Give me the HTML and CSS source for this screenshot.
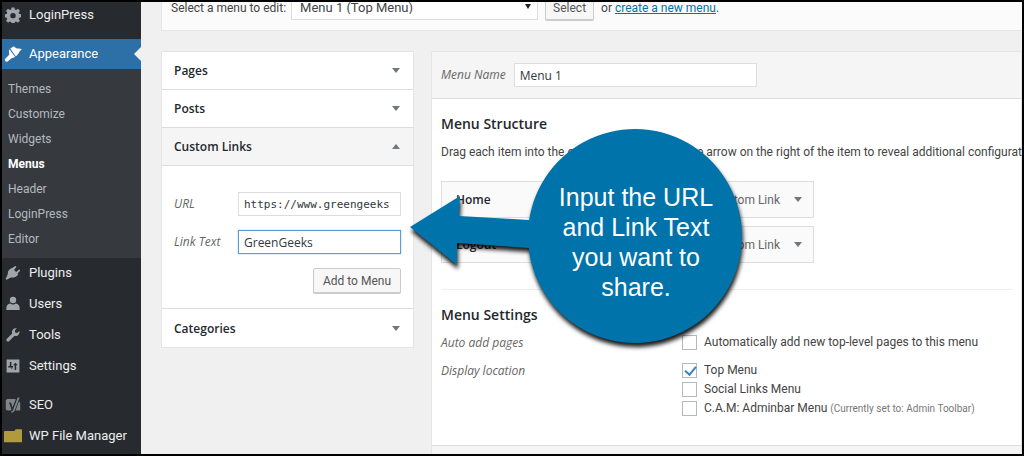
FILE: index.html
```html
<!DOCTYPE html>
<html lang="en">
<head>
<meta charset="utf-8">
<title>Menus</title>
<link rel="stylesheet" href="styles.css">
</head>
<body>
<div class="frame">
  <nav class="sidebar">
    <a class="item first" href="#"><svg class="icon" viewBox="0 0 20 20"><path fill-rule="evenodd" d="M8.200.5h3.600l.5 2.700 1.600.7 2.300-1.600 2.500 2.500-1.600 2.300.7 1.600 2.700.5v3.600l-2.700.5-.7 1.600 1.600 2.300-2.500 2.500-2.300-1.600-1.600.7-.5 2.700H8.200l-.5-2.700-1.600-.7-2.300 1.600-2.500-2.500 1.600-2.300-.7-1.600-2.700-.5V9.200l2.700-.5.7-1.600-1.600-2.300 2.500-2.500 2.300 1.600 1.600-.7zM10 7.400a3.400 3.400 0 1 0 0 6.800 3.400 3.400 0 0 0 0-6.800z"/></svg>LoginPress</a>
    <a class="item current" href="#"><svg class="icon brush" viewBox="0 0 20 20"><path d="M6.900 3.800 11 1.400l2.400 2.300 6.600.8-3.200 3.200-.6 1.800-3 3.300zM5.900 4.800l6.400 8.200c-1.300 1.600-3 .9-4.300 2L4 18.200c-1.900 1-3.900-.9-2.900-2.700L5.500 11c.9-1.800-.9-4.200.4-6.200z"/></svg>Appearance</a>
    <div class="submenu">
      <a href="#">Themes</a>
      <a href="#">Customize</a>
      <a href="#">Widgets</a>
      <a href="#" class="active">Menus</a>
      <a href="#">Header</a>
      <a href="#">LoginPress</a>
      <a href="#">Editor</a>
    </div>
    <a class="item" href="#"><svg class="icon" viewBox="0 0 20 20"><path d="M12.500 1.500c.8-.8 2.300.5 1.500 1.400L11.300 6.200l2.700 2.600 3.200-2.800c1-.8 2.200.6 1.400 1.500l-3 3.200 1 1c-1.500 2.600-4.400 4.600-7.700 3.900-1.800-.4-3.500.7-5 2L1.500 18.500.8 17.500l1.200-2.800c1-1.900 1.700-3.600 1.600-5C3.500 7 6 4.600 8.400 4z"/></svg>Plugins</a>
    <a class="item" href="#"><svg class="icon" viewBox="0 0 20 20"><circle cx="10" cy="5" r="4"/><path d="M6.500 9.500c2 1.700 5 1.700 7 0 3 .5 4.800 2.600 4.800 5.500v2.500H1.700V15c0-2.900 1.800-5 4.800-5.500z"/></svg>Users</a>
    <a class="item" href="#"><svg class="icon" viewBox="0 0 20 20"><path d="M17.900 5.100c.7 2.100-.1 4.400-2 5.500-1.300.8-2.700.8-4 .4L5.300 17.600c-2 2-5-.8-2.900-2.900L9 8.100C8 5.400 9.500 2.300 12.400 1.600c.8-.2 1.600-.1 2.400.1l-2.600 2.700.5 2.400 2.500.7z"/></svg>Tools</a>
    <a class="item" href="#"><svg class="icon" viewBox="0 0 20 20"><path fill-rule="evenodd" d="M2 2h16v16H2zM6 5v5H4v2h2v0h2v2h1v0-2h1v-2H8V5zM13 6l-3 3h2v6h2V9h2z"/></svg>Settings</a>
    <a class="item spaced" href="#"><svg class="icon dim" viewBox="0 0 20 20"><path d="M3.500 2.500h10L12 6.500 9.300 13 7.500 7H5l3 8.200c-.3 1-.9 1.600-2 1.800H3.500C2 17 1 16 1 14.500V5c0-1.500 1-2.500 2.500-2.500z"/><path d="M15.800.5h2.500L12.500 16c-.8 2-2 3.500-4.500 3.700v-1.900c1.300-.3 2-1.100 2.300-2.300z"/><path d="M17.400 5.500c1 .5 1.600 1.500 1.600 2.500v9h-5.900z"/></svg>SEO</a>
    <a class="item" href="#"><svg class="icon folder" viewBox="0 0 20 20"><path d="M0 5.500c0-.6.400-1 1-1h10.500l1.500-2h6c.6 0 1 .4 1 1V17H0z"/></svg>WP File Manager</a>
  </nav>

  <main class="main">
    <form class="chooser">
      <label for="menu">Select a menu to edit:</label>
      <select id="menu" class="menu-select"><option>Menu 1 (Top Menu)</option></select>
      <button type="button" class="button select-button">Select</button>
      <span class="or">or <a href="#">create a new menu</a>.</span>
    </form>

    <div class="columns">
      <section class="accordion">
        <h3 class="acc-head">Pages<span class="caret"></span></h3>
        <h3 class="acc-head">Posts<span class="caret"></span></h3>
        <h3 class="acc-head open">Custom Links<span class="caret up"></span></h3>
        <div class="acc-body">
          <div class="field"><label for="url">URL</label><input id="url" class="text mono" type="text" value="https://www.greengeeks"></div>
          <div class="field"><label for="text">Link Text</label><input id="text" class="text focused" type="text" value="GreenGeeks"></div>
          <button type="button" class="button add">Add to Menu</button>
        </div>
        <h3 class="acc-head">Categories<span class="caret"></span></h3>
      </section>

      <section class="editor">
        <div class="editor-head"><label for="name">Menu Name</label><input id="name" class="text name" type="text" value="Menu 1"></div>
        <div class="editor-body">
          <h2>Menu Structure</h2>
          <p class="hint">Drag each item into the order you prefer. Click the arrow on the right of the item to reveal additional configuration options.</p>
          <div class="menu-item"><b>Home</b><span>Custom Link</span><i class="caret"></i></div>
          <div class="menu-item"><b>Logout</b><span>Custom Link</span><i class="caret"></i></div>
          <hr>
          <h2>Menu Settings</h2>
          <div class="setting">
            <em>Auto add pages</em>
            <div><label class="check"><input type="checkbox">Automatically add new top-level pages to this menu</label></div>
          </div>
          <div class="setting">
            <em>Display location</em>
            <div>
              <label class="check"><input type="checkbox" checked>Top Menu</label>
              <label class="check"><input type="checkbox">Social Links Menu</label>
              <label class="check"><input type="checkbox"><span>C.A.M: Adminbar Menu <small>(Currently set to: Admin Toolbar)</small></span></label>
            </div>
          </div>
        </div>
        <div class="editor-foot"></div>
      </section>
    </div>

    <div class="callout">
      <svg class="callout-shape" viewBox="0 0 332 214"><path d="M0 98 50 67 49 87 119 91V92A107 107 0 1 1 119 122V119L47 114V136z"/></svg>
      <p>Input the URL<br>and Link Text<br>you want to<br>share.</p>
    </div>
  </main>
</div>
</body>
</html>
```
FILE: styles.css
```css
* { box-sizing: border-box; }
body {
  margin: 0;
  font: 12px/20px Roboto, "Open Sans", sans-serif;
  color: #444;
  background: #f0f0f0;
}
.frame {
  display: flex;
  height: 100vh;
  overflow: hidden;
  border: 2px solid #000;
}

.sidebar {
  flex: 0 0 139px;
  background: #272b30;
}
.item {
  position: relative;
  display: flex;
  align-items: center;
  gap: 8px;
  height: 30px;
  margin-bottom: 1px;
  padding-left: 3px;
  color: #eee;
  font-size: 13px;
  text-decoration: none;
  white-space: nowrap;
}
.item.first { height: 26px; margin-bottom: 11px; }
.item.spaced { margin-top: 9px; }
.item.current { background: #2d70a8; color: #fff; margin-bottom: 0; }
.item.current::after {
  content: "";
  position: absolute;
  right: 0;
  border: 7px solid transparent;
  border-left: 0;
  border-right-color: #f0f0f0;
}
.icon { width: 16px; height: 16px; flex: none; fill: #a0a5aa; }
.icon.brush { width: 18px; height: 18px; margin: 0 -1px; fill: #fff; }
.icon.dim { fill: #80858a; }
.icon.folder { width: 18px; height: 18px; margin: 0 -1px; fill: #b09a3c; }
.submenu {
  display: flex;
  flex-direction: column;
  padding: 8px 6px 6px;
  background: #363a3f;
}
.submenu a { color: #b4b9be; line-height: 25px; text-decoration: none; }
.submenu .active { color: #fff; font-weight: 700; }

.main { position: relative; flex: 1; min-width: 0; padding-left: 20px; }
.chooser {
  position: relative;
  display: flex;
  align-items: flex-start;
  height: 29px;
  padding-left: 9px;
  background: #fbfbfb;
  border: 1px solid #e5e5e5;
  border-width: 0 0 1px 1px;
  line-height: 13px;
}
.chooser label { flex: 0 0 113px; white-space: nowrap; }
.menu-select {
  width: 247px;
  height: 18px;
  margin-left: 5px;
  padding: 0 8px 5px;
  appearance: none;
  border: 1px solid #ddd;
  border-top: 0;
  border-radius: 0;
  background: #fff;
  color: #444;
  font: 13px/12px Roboto, sans-serif;
}
.chooser::after {
  content: "";
  position: absolute;
  left: 363px;
  top: 2px;
  border: 3px solid transparent;
  border-top: 5px solid #222;
  border-bottom: 0;
}
.button {
  border: 1px solid #ccc;
  border-radius: 2px;
  box-shadow: 0 1px 0 #ccc;
  background: #f7f7f7;
  color: #555;
  font: 12px/20px Roboto, "Open Sans", sans-serif;
}
.select-button {
  width: 49px;
  height: 18px;
  margin: 0 7px;
  padding: 0 0 5px;
  border-top: 0;
  border-radius: 0 0 2px 2px;
  line-height: 12px;
}
.or a { color: #0073aa; }

.columns {
  display: grid;
  grid-template-columns: 253px minmax(0, 1fr);
  gap: 17px;
  padding-top: 20px;
}
.accordion, .editor { border: 1px solid #e5e5e5; background: #fff; }
.accordion { align-self: start; }
.acc-head {
  display: flex;
  align-items: center;
  justify-content: space-between;
  height: 38px;
  margin: 0;
  padding: 0 13px 0 12px;
  border-bottom: 1px solid #ddd;
  color: #23282d;
  font: 600 12px "Open Sans", sans-serif;
}
.acc-head:last-child { border-bottom: 0; }
.acc-head.open { background: #f5f5f5; }
.caret {
  border: 4px solid transparent;
  border-top: 5px solid #72777c;
  border-bottom: 0;
}
.caret.up { border-top: 0; border-bottom: 5px solid #72777c; }
.acc-body {
  display: flex;
  flex-direction: column;
  gap: 14px;
  padding: 26px 12px 15px;
  border-bottom: 1px solid #ddd;
}
.field { display: flex; align-items: center; justify-content: space-between; }
.field label, .editor-head label, .setting em {
  color: #666;
  font: italic 12px/20px "Open Sans", sans-serif;
}
.text {
  width: 163px;
  height: 24px;
  padding: 0 5px;
  border: 1px solid #ddd;
  border-radius: 0;
  background: #fff;
  color: #32373c;
  font: 12px "Open Sans", sans-serif;
  outline: 0;
}
.mono { font: 11px "DejaVu Sans Mono", monospace; }
.focused { border-color: #5b9dd9; box-shadow: 0 0 1px #5b9dd9; }
.add { align-self: flex-end; width: 88px; height: 25px; padding: 0; }

.editor-head {
  display: flex;
  align-items: center;
  gap: 8px;
  height: 47px;
  padding: 0 9px;
  border-bottom: 1px solid #ddd;
  background: #f5f5f5;
}
.name { width: 243px; }
.editor-body { padding: 15px 9px 27px; }
h2 { margin: 0; color: #23282d; font: 600 14px/20px "Open Sans", sans-serif; }
.hint { margin: 8px 0 19px; white-space: nowrap; }
.menu-item {
  display: flex;
  align-items: center;
  width: 373px;
  height: 37px;
  margin-bottom: 8px;
  padding: 0 11px 0 14px;
  border: 1px solid #ddd;
  background: #fafafa;
}
.menu-item b { flex: 1; color: #23282d; font: 600 12px "Open Sans", sans-serif; }
.menu-item span { margin-right: 14px; color: #666; }
hr { margin: 26px 0 15px; border: 0; border-top: 1px solid #eee; }
.setting {
  display: grid;
  grid-template-columns: 241px minmax(0, 1fr);
  margin-top: 8px;
}
.check { display: flex; align-items: center; gap: 7px; line-height: 19px; white-space: nowrap; }
.check input {
  flex: none;
  width: 15px;
  height: 15px;
  margin: 0;
  appearance: none;
  border: 1px solid #b4b9be;
  background: #fff;
}
.check input:checked::before {
  content: "";
  display: block;
  width: 5px;
  height: 9px;
  margin: 0 0 0 4px;
  border: solid #3582c4;
  border-width: 0 2px 2px 0;
  transform: rotate(40deg);
}
.check small { color: #777; font: 10px Roboto, sans-serif; }
.editor-foot { height: 40px; border-top: 1px solid #ddd; background: #f5f5f5; }

.callout { position: absolute; left: 269px; top: 127px; width: 332px; }
.callout-shape {
  display: block;
  overflow: visible;
  fill: #0073aa;
  filter: drop-shadow(1px 4px 2px rgba(0, 0, 0, .9));
}
.callout p {
  position: absolute;
  inset: 53px 0 auto 120px;
  margin: 0;
  color: #fff;
  font: 25px/30px "Liberation Sans", Arial, sans-serif;
  text-align: center;
}
```
